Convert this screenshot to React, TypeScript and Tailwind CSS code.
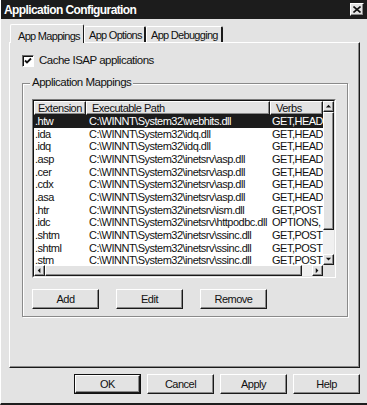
import React from "react";

const raised =
  "border border-t-white border-l-white border-r-[#1a1a1a] border-b-[#1a1a1a] shadow-[inset_-1px_-1px_0_#8a8a8a]";

const rows: [string, string, string][] = [
  [".htw", "C:\\WINNT\\System32\\webhits.dll", "GET,HEAD"],
  [".ida", "C:\\WINNT\\System32\\idq.dll", "GET,HEAD"],
  [".idq", "C:\\WINNT\\System32\\idq.dll", "GET,HEAD"],
  [".asp", "C:\\WINNT\\System32\\inetsrv\\asp.dll", "GET,HEAD"],
  [".cer", "C:\\WINNT\\System32\\inetsrv\\asp.dll", "GET,HEAD"],
  [".cdx", "C:\\WINNT\\System32\\inetsrv\\asp.dll", "GET,HEAD"],
  [".asa", "C:\\WINNT\\System32\\inetsrv\\asp.dll", "GET,HEAD"],
  [".htr", "C:\\WINNT\\System32\\inetsrv\\ism.dll", "GET,POST"],
  [".idc", "C:\\WINNT\\System32\\inetsrv\\httpodbc.dll", "OPTIONS,"],
  [".shtm", "C:\\WINNT\\System32\\inetsrv\\ssinc.dll", "GET,POST"],
  [".shtml", "C:\\WINNT\\System32\\inetsrv\\ssinc.dll", "GET,POST"],
  [".stm", "C:\\WINNT\\System32\\inetsrv\\ssinc.dll", "GET,POST"],
];

function Arrow({ dir }: { dir: "up" | "down" | "left" | "right" }) {
  const pts: Record<string, string> = {
    up: "1,5 4,2 7,5",
    down: "1,2 4,5 7,2",
    left: "5,1 2,4 5,7",
    right: "2,1 5,4 2,7",
  };
  return (
    <div className={`w-[11px] h-[11px] shrink-0 bg-[#e3e3e3] flex items-center justify-center ${raised}`}>
      <svg width="7" height="7" viewBox="0 0 8 8">
        <polygon points={pts[dir]} fill="#111" />
      </svg>
    </div>
  );
}

function Btn({ label, def, w = "w-[67px]" }: { label: string; def?: boolean; w?: string }) {
  if (def) {
    return (
      <div className={`${w} h-[20px] border border-[#111] flex`}>
        <div className={`flex-1 flex items-center justify-center ${raised}`}>{label}</div>
      </div>
    );
  }
  return <div className={`${w} h-[20px] flex items-center justify-center ${raised}`}>{label}</div>;
}

export default function App() {
  return (
    <div className="w-[367px] h-[405px] bg-[#e3e3e3] flex flex-col overflow-hidden border-l border-l-white border-b-2 border-b-[#1e1e1e] font-['Liberation_Sans',Arial,sans-serif] text-[11px] tracking-[-0.5px] text-[#111] leading-none">
      {/* Title bar */}
      <div className="h-[19px] shrink-0 bg-[#1c1c1c] flex items-center justify-between pl-[3px] pr-[3px]">
        <span className="text-white font-bold text-[12px] tracking-[-0.6px]">Application Configuration</span>
        <div className={`w-[14px] h-[13px] bg-[#e3e3e3] flex items-center justify-center ${raised}`}>
          <svg width="8" height="7" viewBox="0 0 8 7">
            <path d="M0.5 0.5 L7.5 6.5 M7.5 0.5 L0.5 6.5" stroke="#111" strokeWidth="1.6" />
          </svg>
        </div>
      </div>

      <div className="pl-[8px] pt-[5px]">
        {/* Tabs */}
        <div className="flex items-end h-[18px] pl-[1px] whitespace-nowrap tracking-[-0.7px]">
          <div className="relative z-10 -mb-px w-[74px] h-[19px] bg-[#e3e3e3] border-t border-l border-t-white border-l-white border-r border-r-[#1a1a1a] rounded-t-[2px] flex items-start pt-[6px] pl-[7px]">
            App Mappings
          </div>
          <div className="w-[62px] h-[16px] border-t border-l border-t-white border-l-white border-r-2 border-r-[#1a1a1a] rounded-t-[2px] flex items-center pl-[4px] pt-[1px]">
            App Options
          </div>
          <div className="w-[77px] h-[16px] border-t border-l border-t-white border-l-white border-r-2 border-r-[#1a1a1a] rounded-t-[2px] flex items-center pl-[4px] pt-[1px]">
            App Debugging
          </div>
        </div>

        {/* Panel */}
        <div className="w-[351px] h-[326px] border border-t-white border-l-white border-r-[#1a1a1a] border-b-[#1a1a1a] shadow-[inset_-1px_-1px_0_#8a8a8a] pl-[12px] pt-[12px]">
          <div className="flex items-center h-[12px] gap-[5px]">
            <div className="w-[12px] h-[12px] bg-white border border-t-[#6a6a6a] border-l-[#6a6a6a] border-r-white border-b-white shadow-[inset_1px_1px_0_#111] flex items-center justify-center">
              <svg width="8" height="8" viewBox="0 0 8 8">
                <path d="M1 3.5 L3 5.5 L7 1.5" stroke="#111" strokeWidth="1.8" fill="none" />
              </svg>
            </div>
            <span className="text-[11.5px]">Cache ISAP applications</span>
          </div>

          {/* Group box */}
          <div className="relative mt-[16px] w-[326px] h-[234px] border border-[#8a8a8a] shadow-[1px_1px_0_white,inset_1px_1px_0_white] pl-[9px] pt-[15px]">
            <span className="absolute -top-[7px] left-[7px] bg-[#e3e3e3] px-[2px] text-[11.5px]">Application Mappings</span>

            {/* List */}
            <div className="w-[304px] h-[179px] border border-t-[#7a7a7a] border-l-[#7a7a7a] border-r-white border-b-white">
              <div className="w-full h-full border border-t-[#111] border-l-[#111] border-r-[#e3e3e3] border-b-[#e3e3e3] flex flex-col bg-white">
                <div className="flex h-[164px]">
                  <div className="w-[289px] flex flex-col overflow-hidden">
                    <div className="flex h-[14px] shrink-0 bg-[#e3e3e3]">
                      <div className={`w-[52px] ${raised} flex items-center pl-[3px]`}>Extension</div>
                      <div className={`w-[184px] ${raised} flex items-center pl-[5px]`}>Executable Path</div>
                      <div className={`w-[53px] ${raised} flex items-center pl-[5px]`}>Verbs</div>
                    </div>
                    {rows.map((r, i) => (
                      <div
                        key={r[0]}
                        className={`flex h-[12.7px] shrink-0 items-center whitespace-nowrap ${i === 0 ? "bg-[#1c1c1c] text-white" : ""}`}
                      >
                        <div className="w-[52px] pl-[1px] overflow-hidden">{r[0]}</div>
                        <div className="w-[184px] pl-[3px] overflow-hidden">{r[1]}</div>
                        <div className="w-[53px] pl-[2px] overflow-hidden">{r[2]}</div>
                      </div>
                    ))}
                  </div>
                  {/* vertical scrollbar */}
                  <div className="w-[11px] flex flex-col bg-[#f0f0f0]">
                    <Arrow dir="up" />
                    <div className={`h-[118px] bg-[#e3e3e3] ${raised}`} />
                    <div className="flex-1" />
                    <Arrow dir="down" />
                  </div>
                </div>
                {/* horizontal scrollbar */}
                <div className="flex h-[11px] bg-[#f0f0f0]">
                  <Arrow dir="left" />
                  <div className={`w-[257px] bg-[#e3e3e3] ${raised}`} />
                  <div className="flex-1" />
                  <Arrow dir="right" />
                  <div className="w-[11px] bg-[#e3e3e3]" />
                </div>
              </div>
            </div>

            <div className="flex gap-[17px] mt-[11px]">
              <Btn label="Add" />
              <Btn label="Edit" />
              <Btn label="Remove" />
            </div>
          </div>
        </div>
      </div>

      {/* Bottom buttons */}
      <div className="flex justify-end gap-[6px] pr-[7px] mt-[6px]">
        <Btn label="OK" def />
        <Btn label="Cancel" />
        <Btn label="Apply" />
        <Btn label="Help" />
      </div>
    </div>
  );
}
